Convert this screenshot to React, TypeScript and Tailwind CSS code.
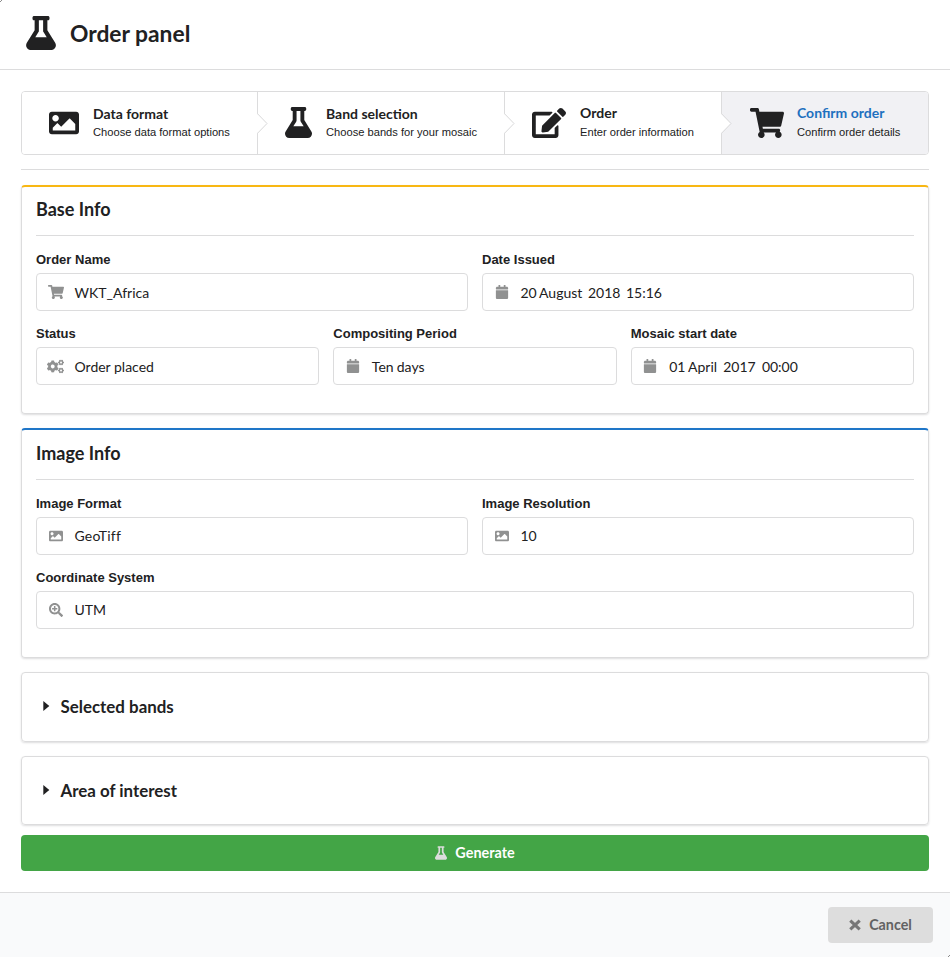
import type { ReactNode } from "react";
import type { IconType } from "react-icons";
import { FaFlask, FaImage, FaEdit, FaShoppingCart, FaCalendar, FaCogs, FaSearchPlus } from "react-icons/fa";

const lato = "font-['Lato',sans-serif]";

type StepProps = {
  icon: IconType;
  title: string;
  text: string;
  width: string;
  pad: string;
  iconClass: string;
  titleClass?: string;
  active?: boolean;
  last?: boolean;
};

function Step({ icon: Icon, title, text, width, pad, iconClass, titleClass = "pt-[13px] mb-px", active, last }: StepProps) {
  return (
    <div
      className={`relative flex h-full items-center ${pad} ${width} ${active ? "bg-[#f1f1f4]" : "bg-white"} ${last ? "rounded-r-[3px]" : "border-r border-[#dcdcdd] rounded-l-[3px]"}`}
    >
      <Icon className={`shrink-0 ${iconClass}`} />
      <div className="self-start whitespace-nowrap">
        <div className={`${lato} text-[14px] leading-[18px] font-bold ${titleClass} ${active ? "text-[#1e70bf]" : ""}`}>{title}</div>
        <div className="text-[11.15px] leading-[17px]">{text}</div>
      </div>
      {!last && (
        <svg className="absolute top-[21px] -right-[11px] z-10" width="11" height="21" viewBox="0 0 11 21">
          <path d="M0 .5 9.8 10.5 0 20.5z" fill="#fff" />
          <path d="M.5 .7 10 10.5 .5 20.3" fill="none" stroke="#d8d8d9" />
        </svg>
      )}
    </div>
  );
}

type FieldProps = {
  label: string;
  icon: IconType;
  iconClass?: string;
  textClass?: string;
  children: ReactNode;
};

function Field({ label, icon: Icon, iconClass = "size-[14px]", textClass = "", children }: FieldProps) {
  return (
    <div className="min-w-0 flex-1">
      <div className="mb-1 h-[18px] text-[13px] leading-[18px] font-bold">{label}</div>
      <div className="flex h-[38px] items-center rounded-[4px] border border-[#dcdcdd]">
        <div className="flex w-[37.5px] justify-center text-[#909191]">
          <Icon className={iconClass} />
        </div>
        <div className={`${lato} text-[14px] leading-[17px] whitespace-pre ${textClass}`}>{children}</div>
      </div>
    </div>
  );
}

function Panel({ title, accent, className, titleClass, children }: { title: string; accent: string; className: string; titleClass: string; children: ReactNode }) {
  return (
    <section
      className={`rounded-[4px] border border-t-2 border-[#dcdcdd] px-[14px] shadow-[0_1px_2px_rgba(34,36,38,0.15)] ${accent} ${className}`}
    >
      <h2 className={`${lato} border-b border-[#dcdcdd] text-[18px] leading-[23px] font-bold ${titleClass}`}>{title}</h2>
      <div className="mt-[15px] flex flex-col gap-[14px]">{children}</div>
    </section>
  );
}

function Accordion({ title, className }: { title: string; className: string }) {
  return (
    <section className={`flex items-center rounded-[4px] border border-[#dcdcdd] pl-[21px] shadow-[0_1px_2px_rgba(34,36,38,0.15)] ${className}`}>
      <svg className="mr-[10.5px] -mt-[2px]" width="7" height="10" viewBox="0 0 7 10" fill="currentColor">
        <path d="M.3 0 6.3 5 .3 10z" />
      </svg>
      <span className={`${lato} text-[16.9px] leading-5 font-bold`}>{title}</span>
    </section>
  );
}

function CornerMark({ className }: { className: string }) {
  return (
    <svg className={`absolute ${className}`} width="2" height="2" viewBox="0 0 2 2" fill="#8a8a8a">
      <path d="M1 0h1v1H1zM0 1h1v1H0z" />
    </svg>
  );
}

export default function App() {
  return (
    <div className="relative flex h-[957px] w-[950px] flex-col overflow-hidden bg-white font-['Liberation_Sans',Arial,sans-serif] text-[#212122]">
      <CornerMark className="top-0 left-0" />
      <CornerMark className="right-0 bottom-0" />
      <header className="flex h-[70px] shrink-0 items-center border-b border-[#dcdcdd] pl-[25.5px]">
        <FaFlask className="-mt-[3px] h-[34px] w-[30px]" />
        <h1 className={`${lato} -mt-1 ml-[14.5px] text-[22.8px] leading-[30px] font-bold`}>Order panel</h1>
      </header>

      <main className="flex h-[822px] shrink-0 flex-col px-[21px] pt-[21px]">
        <nav className="flex h-16 shrink-0 rounded-[4px] border border-[#dcdcdd]">
          <Step icon={FaImage} title="Data format" text="Choose data format options" width="w-[236px]" pad="pl-[27px]" iconClass="size-[30px] mr-[14px]" />
          <Step icon={FaFlask} title="Band selection" text="Choose bands for your mosaic" width="w-[247px]" pad="pl-[27px]" iconClass="-mt-px h-[31px] w-[27px] mr-[14px]" />
          <Step icon={FaEdit} title="Order" text="Enter order information" width="w-[217px]" pad="pl-[27px]" iconClass="size-[34px] mr-[14px]" titleClass="pt-3 mb-0.5" />
          <Step icon={FaShoppingCart} title="Confirm order" text="Confirm order details" width="w-[206px]" pad="pl-[28px]" iconClass="size-[34px] mr-[13px]" titleClass="pt-3 mb-0.5" active last />
        </nav>
        <div className="mt-[14px] h-px shrink-0 bg-[#dcdcdd]" />

        <Panel title="Base Info" accent="border-t-[#f8b713]" className="mt-[15px] h-[229px] shrink-0" titleClass="h-[49px] pt-[11px]">
          <div className="flex gap-[14px]">
            <Field label="Order Name" icon={FaShoppingCart} iconClass="size-[16px]">WKT_Africa</Field>
            <Field label="Date Issued" icon={FaCalendar} textClass="[word-spacing:-0.8px]">{"20 August  2018  15:16"}</Field>
          </div>
          <div className="flex gap-[14px]">
            <Field label="Status" icon={FaCogs} iconClass="size-[17px]">Order placed</Field>
            <Field label="Compositing Period" icon={FaCalendar} textClass="[word-spacing:-0.4px]">Ten days</Field>
            <Field label="Mosaic start date" icon={FaCalendar} textClass="[word-spacing:-0.5px]">{"01 April  2017  00:00"}</Field>
          </div>
        </Panel>

        <Panel title="Image Info" accent="border-t-[#1f76c8]" className="mt-[14px] h-[230px] shrink-0" titleClass="h-[50px] pt-3">
          <div className="flex gap-[14px]">
            <Field label="Image Format" icon={FaImage} textClass="pb-0.5 tracking-[0.2px]">GeoTiff</Field>
            <Field label="Image Resolution" icon={FaImage} textClass="pb-0.5">10</Field>
          </div>
          <Field label="Coordinate System" icon={FaSearchPlus} textClass="pb-0.5">UTM</Field>
        </Panel>

        <Accordion title="Selected bands" className="mt-[14px] h-[70px] shrink-0" />
        <Accordion title="Area of interest" className="mt-[14px] h-[69px] shrink-0" />

        <button className={`${lato} mt-[10px] flex h-9 shrink-0 items-center justify-center rounded-[4px] bg-[#43a546] text-[14.4px] leading-[18px] font-bold text-white`}>
          <FaFlask className="mr-[8px] h-[14px] w-[12px] text-[#dcdcdc]" />
          Generate
        </button>
      </main>

      <footer className="flex h-[65px] shrink-0 justify-end border-t border-[#dcdcdd] bg-[#f9fafb] pt-[14px] pr-[17px]">
        <button className={`${lato} flex h-9 w-[105px] items-center justify-center rounded-[4px] bg-[#dddddd] text-[14.3px] leading-[18px] font-bold text-[#626263]`}>
          <svg className="mr-[8px]" width="12" height="12" viewBox="0 0 12 12">
            <path d="m2.4 2.6 7.2 6.8m0-6.8-7.2 6.8" stroke="#767677" strokeWidth="3.1" strokeLinecap="square" />
          </svg>
          Cancel
        </button>
      </footer>
    </div>
  );
}
